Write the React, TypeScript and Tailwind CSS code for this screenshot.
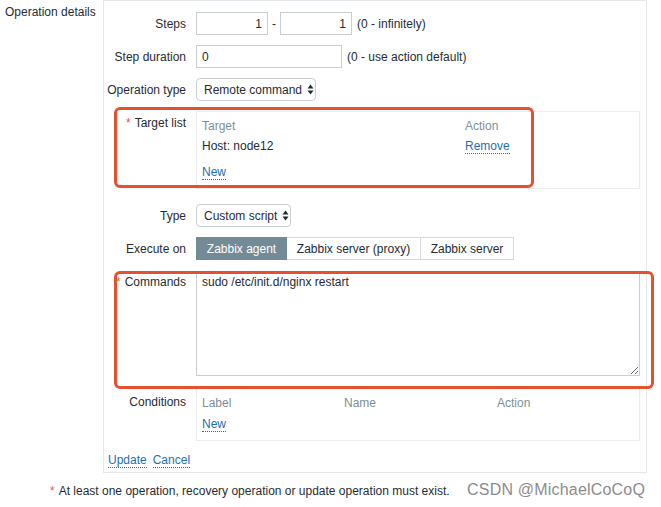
import React from "react";

const link = "text-[#1f6fa8] border-b border-dotted border-[#1f6fa8] leading-[13px]";
const head = "text-[#7d8f99]";
const input = "h-[23px] border border-[#c9ced1] bg-white px-[5px] flex items-center whitespace-nowrap";

function Arrows() {
  return (
    <svg width="7" height="11" viewBox="0 0 7 11" className="ml-[5px] shrink-0">
      <path d="M3.5 0.5 L6.5 4.5 L0.5 4.5 Z" fill="#1f2c33" />
      <path d="M3.5 10.5 L6.5 6.5 L0.5 6.5 Z" fill="#1f2c33" />
    </svg>
  );
}

function Row({ label, req, children, pt }: { label: string; req?: boolean; children: React.ReactNode; pt?: string }) {
  return (
    <div className={`grid grid-cols-[82px_444px] gap-x-[10px] ${pt ? "items-start" : "items-center"}`}>
      <div className={`text-right ${pt ?? ""}`}>
        {req && <span className="text-[#e45959] mr-[4px]">*</span>}
        {label}
      </div>
      <div>{children}</div>
    </div>
  );
}

export default function App() {
  return (
    <div
      className="relative w-[661px] h-[507px] bg-white text-[12px] leading-[14px] text-[#1f2c33] overflow-hidden"
      style={{ fontFamily: '"Liberation Sans", Arial, sans-serif' }}
    >
      <div className="flex">
        <div className="w-[103px] shrink-0 pl-[5px] pt-[5px]">Operation details</div>
        <div className="w-[544px] h-[473px] border border-[#e6e9eb] flex flex-col pt-[11px]">
          <Row label="Steps">
            <div className="flex items-center">
              <div className={`${input} w-[72px] justify-end`}>1</div>
              <span className="mx-[4px]">-</span>
              <div className={`${input} w-[72px] justify-end`}>1</div>
              <span className="ml-[5px]">(0 - infinitely)</span>
            </div>
          </Row>
          <div className="mt-[10px]">
            <Row label="Step duration">
              <div className="flex items-center">
                <div className={`${input} w-[146px]`}>0</div>
                <span className="ml-[5px]">(0 - use action default)</span>
              </div>
            </Row>
          </div>
          <div className="mt-[10px]">
            <Row label="Operation type">
              <div className={`${input} w-[120px] rounded-[4px] px-[7px] justify-between`}>
                Remote command
                <Arrows />
              </div>
            </Row>
          </div>
          <div className="mt-[10px]">
            <Row label="Target list" req pt="pt-[5px]">
              <div className="h-[78px] border border-[#ebeef0] pl-[5px] pt-[7px]">
                <div className="flex">
                  <span className={`w-[263px] ${head}`}>Target</span>
                  <span className={head}>Action</span>
                </div>
                <div className="flex mt-[6px]">
                  <span className="w-[263px]">Host: node12</span>
                  <span><span className={link}>Remove</span></span>
                </div>
                <div className="mt-[12px]">
                  <span className={link}>New</span>
                </div>
              </div>
            </Row>
          </div>
          <div className="mt-[15px]">
            <Row label="Type">
              <div className={`${input} w-[95px] rounded-[4px] px-[7px] justify-between`}>
                Custom script
                <Arrows />
              </div>
            </Row>
          </div>
          <div className="mt-[10px]">
            <Row label="Execute on">
              <div className="flex h-[23px]">
                <div className="w-[91px] flex items-center justify-center bg-[#738a97] text-white border border-[#738a97]">
                  Zabbix agent
                </div>
                <div className="w-[134px] flex items-center justify-center border-y border-r border-[#d3d8db]">
                  Zabbix server (proxy)
                </div>
                <div className="w-[93px] flex items-center justify-center border-y border-r border-[#d3d8db]">
                  Zabbix server
                </div>
              </div>
            </Row>
          </div>
          <div className="mt-[13px]">
            <Row label="Commands" req pt="pt-[2px]">
              <textarea
                readOnly
                defaultValue="sudo /etc/init.d/nginx restart"
                className="block w-[444px] h-[103px] border border-[#c9ced1] px-[5px] pt-[1px] outline-none resize"
                style={{ fontFamily: '"Liberation Sans", Arial, sans-serif', fontSize: 12, lineHeight: "14px" }}
              />
            </Row>
          </div>
          <div className="mt-[12px]">
            <Row label="Conditions" pt="pt-[7px]">
              <div className="h-[53px] border border-[#ebeef0] pl-[5px] pt-[7px]">
                <div className="flex">
                  <span className={`w-[142px] ${head}`}>Label</span>
                  <span className={`w-[153px] ${head}`}>Name</span>
                  <span className={head}>Action</span>
                </div>
                <div className="mt-[7px]">
                  <span className={link}>New</span>
                </div>
              </div>
            </Row>
          </div>
          <div className="mt-[13px] pl-[4px] flex gap-[6px]">
            <span className={link}>Update</span>
            <span className={link}>Cancel</span>
          </div>
        </div>
      </div>
      <div className="mt-[11px] pl-[50px]">
        <span className="text-[#e45959] mr-[4px]">*</span>
        At least one operation, recovery operation or update operation must exist.
      </div>

      <div className="absolute left-[114px] top-[107px] w-[420px] h-[81px] border-[3px] border-[#e5502e] rounded-[6px] pointer-events-none" />
      <div className="absolute left-[114px] top-[271px] w-[540px] h-[118px] border-[3px] border-[#e5502e] rounded-[6px] pointer-events-none" />
      <div
        className="absolute left-[467px] top-[480px] text-[16px] leading-[20px] text-[#8c8c8c] tracking-[0.2px]"
        style={{ fontFamily: '"Liberation Sans", Arial, sans-serif' }}
      >
        CSDN @MichaelCoCoQ
      </div>
    </div>
  );
}
